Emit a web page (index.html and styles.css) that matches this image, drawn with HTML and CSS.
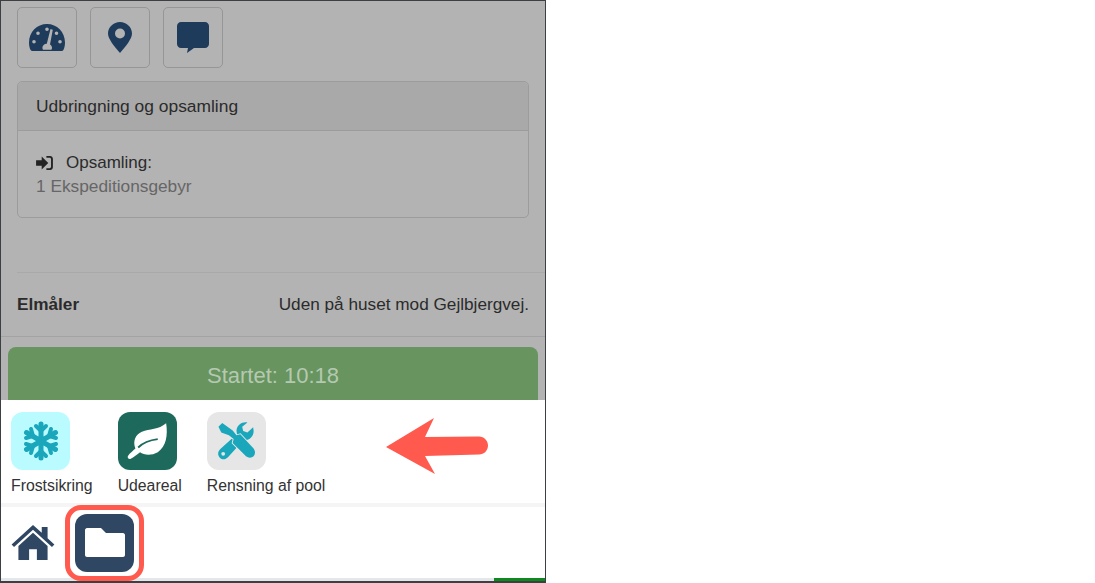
FILE: index.html
```html
<!DOCTYPE html>
<html lang="da">
<head>
    <meta charset="UTF-8">
    <title>Opgave</title>
    <link rel="stylesheet" href="styles.css">
</head>
<body>
    <div class="phone">
        <main class="task">
            <div class="tools">
                <button class="tool">
                    <svg width="36" height="28" viewBox="0 0 36 28"><path class="navy" fill-rule="evenodd" d="M18 0C8 0 0 8 0 18.500c0 3 .6 5.700 1.600 7.500.4.700 1 1 1.800 1h29.200c.8 0 1.400-.3 1.800-1 1-1.800 1.600-4.500 1.600-7.500C36 8 28 0 18 0zM18 3.500a1.800 1.800 0 1 1 0 3.600 1.800 1.800 0 0 1 0-3.600zM9 7.500a1.800 1.800 0 1 1 0 3.600 1.800 1.800 0 0 1 0-3.600zM5 16a1.800 1.800 0 1 1 0 3.600A1.800 1.800 0 0 1 5 16zM31 16a1.800 1.800 0 1 1 0 3.600 1.800 1.800 0 0 1 0-3.600zM27.500 7.500a1.800 1.800 0 1 1 0 3.600 1.800 1.800 0 0 1 0-3.600zM21.500 5l2.300.7-2.800 14.800c1.200.7 2 1.900 2 3.300 0 .8-.2 1.400-.6 2h-8.400c-.4-.6-.6-1.200-.6-2 0-2.400 2-4.200 4.400-4.100z"/></svg>
                </button>
                <button class="tool">
                    <svg width="24" height="31" viewBox="0 0 24 31"><path class="navy" fill-rule="evenodd" d="M12 0C5.500 0 0 5.200 0 11.500 0 17 6.500 24.500 12 31c5.500-6.500 12-14 12-19.500C24 5.200 18.500 0 12 0zm0 6.500a5 5 0 1 1 0 10 5 5 0 0 1 0-10z"/></svg>
                </button>
                <button class="tool">
                    <svg width="32" height="31" viewBox="0 0 32 31"><path class="navy" d="M4 0h24c2.200 0 4 1.800 4 4v18c0 2.200-1.800 4-4 4H17l-7 5 1-5H4c-2.200 0-4-1.800-4-4V4c0-2.200 1.800-4 4-4z"/></svg>
                </button>
            </div>

            <section class="panel">
                <h2 class="panel-head">Udbringning og opsamling</h2>
                <div class="panel-body">
                    <p class="pickup">
                        <svg width="17" height="14" viewBox="0 0 18 15"><path class="ink" d="M0 4.500h6V.5l7 7-7 7v-4H0zM11 0h4c1.700 0 3 1.300 3 3v9c0 1.700-1.300 3-3 3h-4v-2h3.500c.8 0 1.500-.7 1.500-1.500v-8c0-.8-.7-1.500-1.500-1.500H11z"/></svg>
                        Opsamling:
                    </p>
                    <p class="fee">1 Ekspeditionsgebyr</p>
                </div>
            </section>

            <div class="meter">
                <strong>Elmåler</strong>
                <span>Uden på huset mod Gejlbjergvej.</span>
            </div>

            <div class="start-wrap">
                <button class="start">Startet: 10:18</button>
            </div>
        </main>

        <section class="sheet">
            <a class="app" href="#">
                <span class="app-icon frost">
                    <svg width="36" height="40" viewBox="0 0 36 40"><g class="snow"><path d="M18 3v34M3.500 11.500l29 17M3.500 28.500l29-17"/><path class="thin" d="M13 5l5 5 5-5M13 35l5-5 5 5M3 17l7-2-2-7M33 23l-7 2 2 7M3 23l7 2-2 7M33 17l-7-2 2-7"/></g></svg>
                </span>
                <span class="app-label">Frostsikring</span>
            </a>
            <a class="app" href="#">
                <span class="app-icon garden">
                    <svg width="41" height="38" viewBox="0 0 44 40"><path fill="#fff" d="M42 1C44 14 42 26 33 32 26 36 18 35 14 32 11 34 7 38 4 39 2 40 0 38 1 36 3 33 7 30 9 28 6 20 9 13 16 10 24 7 34 8 42 1z"/><path class="vein" d="M12 27C18 21 25 19 33 18"/></svg>
                </span>
                <span class="app-label">Udeareal</span>
            </a>
            <a class="app" href="#">
                <span class="app-icon pool">
                    <svg width="39" height="38" viewBox="0 0 40 40"><path class="teal" d="M37.500 5.500L31.500 11 27 9.500 26 5 31.500.5C26-.5 20.500 3 20 9c0 1.500.3 2.500.5 3.500L3 28.500C0 31.500 0 35 2.500 37.500S8.500 39.500 11 37l16.500-18C33 20 38.500 15.500 38 9z"/><circle cx="6" cy="33.500" r="2" fill="#e6e6e6"/><path class="teal driver" d="M1 5l4-4 11 8 4 5 4-1 14 15c2 2.500 2 6 0 8s-5.500 2-8 0L16 22l1-4-5-4-8-3z"/></svg>
                </span>
                <span class="app-label">Rensning af pool</span>
            </a>
            <svg class="arrow" width="102" height="56" viewBox="0 0 102 56"><path d="M0 29L48 0 39 19 93 18.500c5 0 9 4 9 9s-4 9-9 9L39 38l10 18z"/></svg>
        </section>

        <nav class="dock">
            <button class="dock-home">
                <svg width="44" height="35" viewBox="0 0 44 36"><path class="slate" d="M22 0l9 8V2h6v11.500l7 6.500-2.500 2.500L22 5 2.500 22.500 0 20zM22 8l15 13.500V36H26V25h-8v11H7V21.500z"/></svg>
            </button>
            <div class="dock-ring">
                <button class="dock-folder">
                    <svg width="40" height="29" viewBox="0 0 40 29"><path fill="#fff" d="M2 0h14l5 5h17c1 0 2 1 2 2v20c0 1-1 2-2 2H2c-1 0-2-1-2-2V2C0 1 1 0 2 0z"/></svg>
                </button>
            </div>
        </nav>

        <div class="status"><span class="status-fill"></span></div>
    </div>
</body>
</html>
```

FILE: styles.css
```css
* {
    margin: 0;
    padding: 0;
    box-sizing: border-box;
}
body {
    background-color: #fff;
    font-family: "Liberation Sans", Arial, sans-serif;
    color: #2b2b2b;
}
button {
    font-family: inherit;
    border: none;
    background: none;
}
.phone {
    width: 546px;
    height: 583px;
    display: flex;
    flex-direction: column;
    border-left: 1px solid #3c4043;
    border-right: 1px solid #3c4043;
    border-top: 1px solid #3c4043;
    border-bottom: 2px solid #3c4043;
    position: relative;
    overflow: hidden;
}
.navy { fill: #1f3b5c; }
.ink { fill: #222; }
.slate { fill: #2f4763; }
.teal { fill: #1aa6bb; }
.driver {
    stroke: #e6e6e6;
    stroke-width: 2;
    paint-order: stroke;
}
.vein {
    fill: none;
    stroke: #1d6a5c;
    stroke-width: 2;
}

.task {
    height: 399px;
    background-color: #b3b3b3;
    overflow: hidden;
}
.tools {
    display: flex;
    gap: 13px;
    padding: 6px 0 0 16px;
}
.tool {
    width: 60px;
    height: 61px;
    display: flex;
    align-items: center;
    justify-content: center;
    border: 1px solid #969696;
    border-radius: 5px;
}
.panel {
    margin: 13px 16px 0;
    border: 1px solid #9c9c9c;
    border-radius: 5px;
    height: 137px;
}
.panel-head {
    height: 49px;
    padding: 0 18px;
    background-color: #a9a9a9;
    border-bottom: 1px solid #9c9c9c;
    border-radius: 5px 5px 0 0;
    font-size: 17.400px;
    font-weight: normal;
    line-height: 49px;
}
.panel-body {
    padding: 20px 18px;
}
.pickup {
    display: flex;
    align-items: center;
    gap: 13px;
    font-size: 17px;
    line-height: 24px;
}
.fee {
    font-size: 17.300px;
    line-height: 22px;
    color: #666;
}
.meter {
    margin: 54px 0 0 16px;
    padding: 0 16px 0 0;
    height: 64px;
    border-top: 1px solid #a9a9a9;
    display: flex;
    justify-content: space-between;
    align-items: center;
    font-size: 17.200px;
}
.start-wrap {
    border-top: 1px solid #a3a3a3;
    padding: 10px 7px 0;
}
.start {
    width: 530px;
    height: 70px;
    padding-bottom: 12px;
    background-color: #67945f;
    border-radius: 8px;
    color: #b5c9b1;
    font-size: 22px;
}

.sheet {
    height: 107px;
    padding: 12px 0 0 10px;
    background-color: #fff;
    display: flex;
    border-bottom: 4px solid #f5f5f5;
    position: relative;
}
.app {
    display: flex;
    flex-direction: column;
    align-items: flex-start;
    margin-right: 25px;
    text-decoration: none;
    color: #333;
}
.app-icon {
    width: 59px;
    height: 58px;
    border-radius: 12px;
    display: flex;
    align-items: center;
    justify-content: center;
}
.frost { background-color: #b9fbff; }
.garden { background-color: #1d6a5c; }
.pool { background-color: #e6e6e6; }
.app-label {
    margin-top: 6px;
    font-size: 15.800px;
    line-height: 20px;
}
.snow {
    fill: none;
    stroke: #1aa6bb;
    stroke-width: 5;
    stroke-linecap: round;
}
.snow .thin { stroke-width: 4; }
.arrow {
    position: absolute;
    left: 385px;
    top: 18px;
    fill: #ff5a4d;
}

.dock {
    height: 71px;
    padding-left: 10px;
    background-color: #fff;
    display: flex;
    align-items: center;
}
.dock-home {
    width: 44px;
    height: 35px;
    margin-right: 10px;
    display: flex;
}
.dock-ring {
    flex-shrink: 0;
    padding: 4px 5px;
    border: 5px solid #ff5a4d;
    border-radius: 16px;
    background-color: #fff;
    position: relative;
    z-index: 1;
}
.dock-folder {
    width: 59px;
    height: 58px;
    border-radius: 12px;
    background-color: #2f4763;
    display: flex;
    align-items: center;
    justify-content: center;
}
.status {
    flex: 1;
    background-color: #e4e7ea;
    display: flex;
    justify-content: flex-end;
}
.status-fill {
    width: 51px;
    background-color: #0d8a1f;
}
```
